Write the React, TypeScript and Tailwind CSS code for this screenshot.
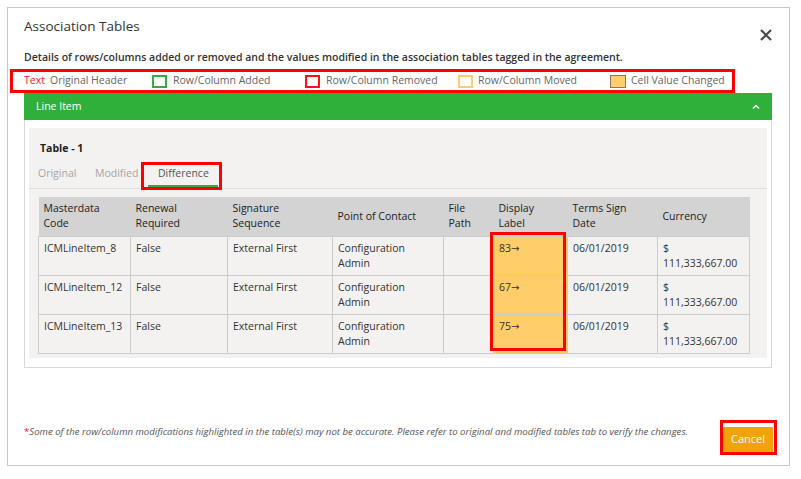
import React from "react";

const F = { fontFamily: '"Open Sans", "Noto Sans", sans-serif' };

const cols = [
  { h: ["Masterdata", "Code"], w: 92 },
  { h: ["Renewal", "Required"], w: 97 },
  { h: ["Signature", "Sequence"], w: 105 },
  { h: ["Point of Contact"], w: 111 },
  { h: ["File", "Path"], w: 50 },
  { h: ["Display", "Label"], w: 74 },
  { h: ["Terms Sign", "Date"], w: 90 },
  { h: ["Currency"], w: 92 },
];

const rows = [
  ["ICMLineItem_8", "83"],
  ["ICMLineItem_12", "67"],
  ["ICMLineItem_13", "75"],
];

const td = "border border-[#cccccc] align-top px-[5px] pt-[4px]";

export default function App() {
  return (
    <div className="w-[801px] h-[479px] bg-white pt-[7px] pl-[7px] text-[#333]" style={F}>
      <div className="w-[783px] h-[459px] border border-[#c8c8c8] flex flex-col">
        {/* header */}
        <div className="h-[20px] mt-[8px] flex items-start justify-between">
          <div className="ml-[16px] text-[13.5px] leading-[20px] text-[#333]">Association Tables</div>
          <svg className="mt-[13px] mr-[17px]" width="12" height="12" viewBox="0 0 12 12">
            <path d="M1 1 L11 11 M11 1 L1 11" stroke="#4a4a4a" strokeWidth="2.2" />
          </svg>
        </div>
        <div className="ml-[16px] mt-[13px] text-[10.5px] leading-[16px] font-semibold text-[#333] whitespace-nowrap">
          Details of rows/columns added or removed and the values modified in the association tables tagged in the agreement.
        </div>
        {/* legend */}
        <div className="ml-[2px] mt-[4px] w-[725px] h-[24px] border-[3px] border-[#ff0000] flex items-center pl-[11px] text-[10.5px] text-[#666] whitespace-nowrap">
          <div className="w-[128px] flex items-center">
            <span className="w-[26px] text-[#e8202a]">Text</span>
            <span>Original Header</span>
          </div>
          <div className="w-[153px] flex items-center">
            <span className="w-[15px] h-[13px] border-2 border-[#2eb03a] mr-[6px]" />
            <span>Row/Column Added</span>
          </div>
          <div className="w-[153px] flex items-center">
            <span className="w-[15px] h-[13px] border-2 border-[#ff1010] mr-[6px]" />
            <span>Row/Column Removed</span>
          </div>
          <div className="w-[152px] flex items-center">
            <span className="w-[15px] h-[13px] border-2 border-[#ffcd6a] mr-[5px]" />
            <span>Row/Column Moved</span>
          </div>
          <div className="flex items-center">
            <span className="w-[16px] h-[13px] border border-[#8a7a5c] bg-[#ffcd6a] mr-[5px]" />
            <span>Cell Value Changed</span>
          </div>
        </div>
        {/* panel */}
        <div className="ml-[16px] w-[748px] h-[275px] border-x border-b border-[#d8d8d8] flex flex-col">
          <div className="h-[27px] -mx-px bg-[#2eb03a] flex items-center justify-between pl-[12px] pr-[12px] text-white text-[10.5px]">
            <span>Line Item</span>
            <svg width="8" height="6" viewBox="0 0 8 6">
              <path d="M1 4.5 L4 1.5 L7 4.5" stroke="white" strokeWidth="1.5" fill="none" />
            </svg>
          </div>
          <div className="mt-[8px] ml-[4px] w-[738px] h-[230px] bg-[#f3f2f1] flex flex-col">
            <div className="pt-[12px] pl-[11px] text-[10.5px] leading-[16px] font-bold text-[#222]">Table - 1</div>
            <div className="mt-[9px] flex items-end border-b border-[#dedede] pl-[9px] text-[10.5px] leading-[16px] whitespace-nowrap">
              <div className="w-[57px] pb-[7px] text-[#a5a5a5]">Original</div>
              <div className="w-[53px] pb-[7px] text-[#a5a5a5]">Modified</div>
              <div className="relative w-[70px] px-[10px] pb-[4px] border-b-[3px] border-[#2eb03a] text-[#555]">
                Difference
                <div className="absolute left-[-7px] right-[-4px] top-[-3px] bottom-[-5px] border-[3px] border-[#ff0000]" />
              </div>
            </div>
            <div className="relative mt-[8px] ml-[9px] w-[711px]">
              <table className="border-collapse text-[10.5px] leading-[15px] text-[#333] table-fixed w-[711px]">
                <colgroup>
                  {cols.map((c, i) => (
                    <col key={i} style={{ width: c.w }} />
                  ))}
                </colgroup>
                <thead>
                  <tr className="h-[39px] bg-[#d3d3d3]">
                    {cols.map((c, i) => (
                      <th key={i} className="text-left font-normal align-middle px-[5px] text-[#222]">
                        {c.h.map((l, j) => (
                          <div key={j}>{l}</div>
                        ))}
                      </th>
                    ))}
                  </tr>
                </thead>
                <tbody>
                  {rows.map((r, i) => (
                    <tr key={i} className="h-[39px]">
                      <td className={td}>{r[0]}</td>
                      <td className={td}>False</td>
                      <td className={td}>External First</td>
                      <td className={td}>
                        <div>Configuration</div>
                        <div>Admin</div>
                      </td>
                      <td className={td}></td>
                      <td className={td + " bg-[#ffcd6a]"}>
                        {r[1]}
                        <span className="text-[10px]" style={{ fontFamily: '"DejaVu Sans", sans-serif' }}>→</span>
                      </td>
                      <td className={td}>06/01/2019</td>
                      <td className={td}>
                        <div>$</div>
                        <div>111,333,667.00</div>
                      </td>
                    </tr>
                  ))}
                </tbody>
              </table>
              <div className="absolute left-[452px] top-[35px] w-[76px] h-[119px] border-[3px] border-[#ff0000]" />
            </div>
          </div>
        </div>
        {/* footer */}
        <div className="mt-[57px] flex items-start justify-between">
          <div className="ml-[16px] text-[9.6px] leading-[14px] italic text-[#555] whitespace-nowrap">
            <span className="text-[#e8202a] not-italic">*</span>
            Some of the row/column modifications highlighted in the table(s) may not be accurate. Please refer to original and modified tables tab to verify the changes.
          </div>
          <div className="relative mr-[16px]">
            <button className="w-[50px] h-[25px] bg-[#f2a30c] text-white text-[11px]">Cancel</button>
            <div className="absolute left-[-3px] right-[-4px] top-[-5px] bottom-[-3px] border-[3px] border-[#ff0000]" />
          </div>
        </div>
      </div>
    </div>
  );
}
